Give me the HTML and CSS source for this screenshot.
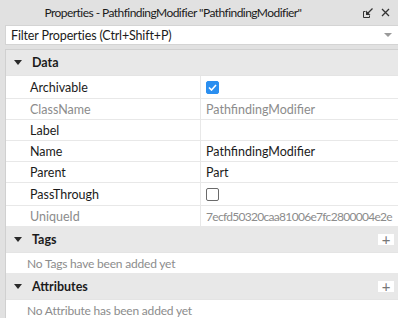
FILE: index.html
```html
<!DOCTYPE html>
<html lang="en">
<head>
    <meta charset="UTF-8">
    <title>Properties</title>
    <link rel="stylesheet" href="styles.css">
</head>
<body>
    <!-- Title bar -->
    <div class="titlebar">
        <div class="title">Properties - PathfindingModifier "PathfindingModifier"</div>
        <div class="title-icons">
            <svg class="dock-icon" width="12" height="12" viewBox="0 0 12 12">
                <path d="M1.5 4.5 V10.5 H7.5" fill="none" stroke="#333" stroke-width="1"/>
                <path d="M1.5 4.5 H3.5 M7.5 10.5 V8.5" fill="none" stroke="#333" stroke-width="1"/>
                <path d="M10.5 1.5 L5 7" stroke="#333" stroke-width="1.2"/>
                <path d="M4 3.5 V8 H8.5 Z" fill="#333"/>
            </svg>
            <svg class="close-icon" width="9" height="9" viewBox="0 0 9 9">
                <path d="M1 1 L8 8 M8 1 L1 8" stroke="#333" stroke-width="1.3"/>
            </svg>
        </div>
    </div>

    <!-- Filter -->
    <div class="filter">
        <span>Filter Properties (Ctrl+Shift+P)</span>
        <span class="filter-arrow"></span>
    </div>

    <div class="panel">
        <!-- Data -->
        <div class="section-head">
            <span class="caret"></span><span class="section-name">Data</span>
        </div>
        <div class="row tall">
            <div class="name">Archivable</div>
            <div class="value"><span class="checkbox checked"><svg width="9" height="7" viewBox="0 0 9 7"><path d="M1 3.5 L3.5 6 L8 1" fill="none" stroke="#fff" stroke-width="1.6"/></svg></span></div>
        </div>
        <div class="row">
            <div class="name muted">ClassName</div>
            <div class="value muted">PathfindingModifier</div>
        </div>
        <div class="row">
            <div class="name">Label</div>
            <div class="value"></div>
        </div>
        <div class="row">
            <div class="name">Name</div>
            <div class="value">PathfindingModifier</div>
        </div>
        <div class="row">
            <div class="name">Parent</div>
            <div class="value">Part</div>
        </div>
        <div class="row tall">
            <div class="name">PassThrough</div>
            <div class="value"><span class="checkbox"></span></div>
        </div>
        <div class="row">
            <div class="name muted">UniqueId</div>
            <div class="value muted uid">7ecfd50320caa81006e7fc2800004e2e</div>
        </div>

        <!-- Tags -->
        <div class="section-head">
            <span class="caret"></span><span class="section-name">Tags</span>
            <span class="add-btn">+</span>
        </div>
        <div class="empty-row">No Tags have been added yet</div>

        <!-- Attributes -->
        <div class="section-head">
            <span class="caret"></span><span class="section-name">Attributes</span>
            <span class="add-btn">+</span>
        </div>
        <div class="empty-row">No Attribute has been added yet</div>
    </div>
</body>
</html>
```

FILE: styles.css
```css
body {
    margin: 0;
    width: 398px;
    height: 318px;
    overflow: hidden;
    background: #e1e1e1;
    font-family: Lato, "Open Sans", sans-serif;
    color: #1b1b1b;
}
.titlebar {
    height: 25px;
    display: flex;
    align-items: center;
    background: #e1e1e1;
}
.title {
    flex: 1;
    text-align: center;
    font-size: 12px;
    letter-spacing: -0.55px;
    padding-left: 4px;
    white-space: nowrap;
}
.title-icons {
    display: flex;
    align-items: center;
    gap: 7px;
    padding-right: 8px;
    padding-left: 20px;
}
.filter {
    margin-left: 5px;
    height: 18px;
    background: #fff;
    border: 1px solid #d4d4d4;
    border-right: none;
    display: flex;
    align-items: center;
    justify-content: space-between;
    padding-left: 5px;
    font-size: 12.5px;
    letter-spacing: -0.15px;
}
.filter-arrow {
    width: 0;
    height: 0;
    border-left: 4px solid transparent;
    border-right: 4px solid transparent;
    border-top: 4px solid #9a9a9a;
    margin-right: 6px;
}
.panel {
    margin-top: 4px;
    margin-left: 5px;
    background: #fff;
    border-left: 1px solid #d0d0d0;
    border-top: 1px solid #d0d0d0;
    font-size: 12.5px;
}
.section-head {
    height: 25px;
    display: flex;
    align-items: center;
    background: #e8e8e8;
    border-bottom: 1px solid #e4e4e4;
}
.caret {
    width: 0;
    height: 0;
    border-left: 4px solid transparent;
    border-right: 4px solid transparent;
    border-top: 5px solid #2a2a2a;
    margin-left: 8px;
    margin-right: 10px;
}
.section-name {
    font-weight: bold;
    flex: 1;
}
.add-btn {
    width: 16px;
    height: 11px;
    background: #fff;
    color: #777;
    font-size: 15px;
    line-height: 11px;
    text-align: center;
    margin-right: 4px;
}
.row {
    display: grid;
    grid-template-columns: 195px 1fr;
    height: 20px;
    border-bottom: 1px solid #e8e8e8;
}
.row.tall {
    height: 22px;
}
.name {
    display: flex;
    align-items: center;
    padding-left: 24px;
    border-right: 1px solid #e8e8e8;
}
.value {
    display: flex;
    align-items: center;
    padding-left: 5px;
    white-space: nowrap;
}
.uid {
    font-size: 12px;
    letter-spacing: -0.7px;
}
.muted {
    color: #8c8c8c;
}
.checkbox {
    width: 11px;
    height: 11px;
    border: 1px solid #6a6a6a;
    border-radius: 2px;
    display: flex;
    align-items: center;
    justify-content: center;
}
.checkbox.checked {
    background: #2b8ff0;
    border-color: #2b8ff0;
}
.empty-row {
    height: 20px;
    display: flex;
    align-items: center;
    padding-left: 21px;
    font-size: 12px;
    letter-spacing: -0.2px;
    color: #8c8c8c;
    border-bottom: 1px solid #e8e8e8;
}
```
